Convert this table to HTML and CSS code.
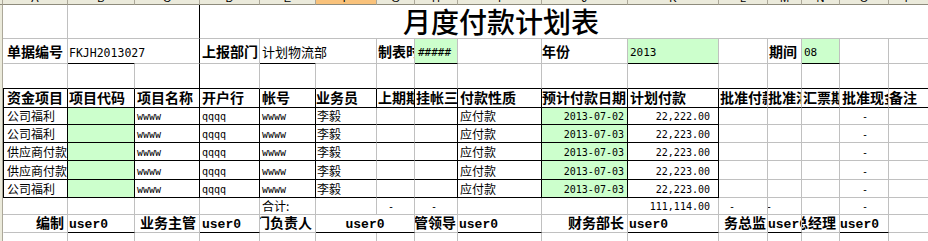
FILE: index.html
```html
<!DOCTYPE html>
<html lang="zh-CN">
<head>
<meta charset="utf-8">
<title>月度付款计划表</title>
<link rel="stylesheet" href="styles.css">
</head>
<body>
<div class="sheet">
  <div class="row colhead">
    <div class="corner"></div>
    <div class="ch">A</div><div class="ch">B</div><div class="ch">C</div><div class="ch">D</div>
    <div class="ch">E</div><div class="ch sel">F</div><div class="ch">G</div><div class="ch">H</div>
    <div class="ch">I</div><div class="ch">J</div><div class="ch">K</div><div class="ch">L</div>
    <div class="ch">M</div><div class="ch">N</div><div class="ch">O</div><div class="ch">P</div>
  </div>

  <div class="row r1">
    <div class="rh"></div>
    <div class="c"></div>
    <div class="c span2 kr"></div>
    <div class="c title-cell"><span class="title">月度付款计划表</span></div>
  </div>

  <div class="row r2">
    <div class="rh"></div>
    <div class="c a"><span class="b14">单据编号</span></div>
    <div class="c ovf kb pl1"><span class="m12">FKJH2013027</span></div>
    <div class="c kr"></div>
    <div class="c"><span class="b14">上报部门</span></div>
    <div class="c ovf kb"><span class="t13">计划物流部</span></div>
    <div class="c"></div>
    <div class="c pl1"><span class="b14">制表时</span></div>
    <div class="c gr kb pl3"><span class="m11">#####</span></div>
    <div class="c"></div>
    <div class="c pl0"><span class="b14">年份</span></div>
    <div class="c gr kb"><span class="m11">2013</span></div>
    <div class="c"></div>
    <div class="c pl1"><span class="b14">期间</span></div>
    <div class="c gr kb"><span class="m11">08</span></div>
    <div class="c"></div>
    <div class="c"></div>
  </div>

  <div class="row r3">
    <div class="rh"></div>
    <div class="c kb"></div><div class="c kb"></div><div class="c kb kr"></div><div class="c kb"></div>
    <div class="c kb"></div><div class="c kb"></div><div class="c kb"></div><div class="c kb"></div>
    <div class="c kb"></div><div class="c kb"></div><div class="c kb"></div><div class="c kb"></div>
    <div class="c kb"></div><div class="c kb"></div><div class="c kb"></div><div class="c kb"></div>
  </div>

  <div class="row r4">
    <div class="rh"></div>
    <div class="c a k kl"><span class="b14">资金项目</span></div>
    <div class="c k pl1"><span class="b14">项目代码</span></div>
    <div class="c k"><span class="b14">项目名称</span></div>
    <div class="c k"><span class="b14">开户行</span></div>
    <div class="c k"><span class="b14">帐号</span></div>
    <div class="c k pl0"><span class="b14">业务员</span></div>
    <div class="c k pl1"><span class="b14">上期期</span></div>
    <div class="c k pl1"><span class="b14">挂帐三</span></div>
    <div class="c k"><span class="b14">付款性质</span></div>
    <div class="c k pl0"><span class="b14">预计付款日期</span></div>
    <div class="c k"><span class="b14">计划付款</span></div>
    <div class="c kb pl1"><span class="b14">批准付款</span></div>
    <div class="c kb pl0"><span class="b14">批准汇票</span></div>
    <div class="c kb pl1"><span class="b14">汇票期限</span></div>
    <div class="c kb"><span class="b14">批准现金</span></div>
    <div class="c kb pl0"><span class="b14">备注</span></div>
  </div>

  <div class="row rd h17">
    <div class="rh"></div>
    <div class="c a k kl"><span class="t12">公司福利</span></div>
    <div class="c gr k"></div>
    <div class="c k"><span class="m10">wwww</span></div>
    <div class="c k"><span class="m10">qqqq</span></div>
    <div class="c k"><span class="m10">wwww</span></div>
    <div class="c kb pl1"><span class="t12">李毅</span></div>
    <div class="c kb"></div>
    <div class="c k"></div>
    <div class="c k"><span class="t12">应付款</span></div>
    <div class="c gr k date"><span class="m10">2013-07-02</span></div>
    <div class="c k amt"><span class="m10">22,222.00</span></div>
    <div class="c"></div><div class="c"></div><div class="c"></div>
    <div class="c dash"><span class="m10">-</span></div>
    <div class="c"></div>
  </div>

  <div class="row rd h18">
    <div class="rh"></div>
    <div class="c a k kl"><span class="t12">公司福利</span></div>
    <div class="c gr k"></div>
    <div class="c k"><span class="m10">wwww</span></div>
    <div class="c k"><span class="m10">qqqq</span></div>
    <div class="c k"><span class="m10">wwww</span></div>
    <div class="c kb pl1"><span class="t12">李毅</span></div>
    <div class="c kb"></div>
    <div class="c k"></div>
    <div class="c k"><span class="t12">应付款</span></div>
    <div class="c gr k date"><span class="m10">2013-07-03</span></div>
    <div class="c k amt"><span class="m10">22,223.00</span></div>
    <div class="c"></div><div class="c"></div><div class="c"></div>
    <div class="c dash"><span class="m10">-</span></div>
    <div class="c"></div>
  </div>

  <div class="row rd h18">
    <div class="rh"></div>
    <div class="c a k kl"><span class="t12">供应商付款</span></div>
    <div class="c gr k"></div>
    <div class="c k"><span class="m10">wwww</span></div>
    <div class="c k"><span class="m10">qqqq</span></div>
    <div class="c k"><span class="m10">wwww</span></div>
    <div class="c kb pl1"><span class="t12">李毅</span></div>
    <div class="c kb"></div>
    <div class="c k"></div>
    <div class="c k"><span class="t12">应付款</span></div>
    <div class="c gr k date"><span class="m10">2013-07-03</span></div>
    <div class="c k amt"><span class="m10">22,223.00</span></div>
    <div class="c"></div><div class="c"></div><div class="c"></div>
    <div class="c dash"><span class="m10">-</span></div>
    <div class="c"></div>
  </div>

  <div class="row rd h19">
    <div class="rh"></div>
    <div class="c a k kl"><span class="t12">供应商付款</span></div>
    <div class="c gr k"></div>
    <div class="c k"><span class="m10">wwww</span></div>
    <div class="c k"><span class="m10">qqqq</span></div>
    <div class="c k"><span class="m10">wwww</span></div>
    <div class="c kb pl1"><span class="t12">李毅</span></div>
    <div class="c kb"></div>
    <div class="c k"></div>
    <div class="c k"><span class="t12">应付款</span></div>
    <div class="c gr k date"><span class="m10">2013-07-03</span></div>
    <div class="c k amt"><span class="m10">22,223.00</span></div>
    <div class="c"></div><div class="c"></div><div class="c"></div>
    <div class="c dash"><span class="m10">-</span></div>
    <div class="c"></div>
  </div>

  <div class="row rd h18">
    <div class="rh"></div>
    <div class="c a k kl"><span class="t12">公司福利</span></div>
    <div class="c gr k"></div>
    <div class="c k"><span class="m10">wwww</span></div>
    <div class="c k"><span class="m10">qqqq</span></div>
    <div class="c k"><span class="m10">wwww</span></div>
    <div class="c kb pl1"><span class="t12">李毅</span></div>
    <div class="c kb"></div>
    <div class="c k"></div>
    <div class="c k"><span class="t12">应付款</span></div>
    <div class="c gr k date"><span class="m10">2013-07-03</span></div>
    <div class="c k amt"><span class="m10">22,223.00</span></div>
    <div class="c"></div><div class="c"></div><div class="c"></div>
    <div class="c dash"><span class="m10">-</span></div>
    <div class="c"></div>
  </div>

  <div class="row rsum">
    <div class="rh"></div>
    <div class="c"></div><div class="c"></div><div class="c"></div><div class="c"></div>
    <div class="c"><span class="t12">合计:</span></div>
    <div class="c"></div>
    <div class="c dash"><span class="m10">-</span></div>
    <div class="c dash"><span class="m10">-</span></div>
    <div class="c"></div>
    <div class="c"></div>
    <div class="c amt"><span class="m10">111,114.00</span></div>
    <div class="c dash-l"><span class="m10">-</span></div>
    <div class="c dash-m"><span class="m10">-</span></div>
    <div class="c"></div>
    <div class="c dash"><span class="m10">-</span></div>
    <div class="c"></div>
  </div>

  <div class="row rsig">
    <div class="rh"></div>
    <div class="c a lab"><span class="b14">编制</span></div>
    <div class="c kb u"><span class="uf">user0</span></div>
    <div class="c lab"><span class="b14">业务主管</span></div>
    <div class="c kb u pl2"><span class="uf">user0</span></div>
    <div class="c lab"><span class="b14">门负责人</span></div>
    <div class="c span2 kb u ctr"><span class="uf">user0</span></div>
    <div class="c lab pr1"><span class="b14">管领导</span></div>
    <div class="c kb u"><span class="uf">user0</span></div>
    <div class="c lab"><span class="b14">财务部长</span></div>
    <div class="c kb u"><span class="uf">user0</span></div>
    <div class="c lab pr1"><span class="b14">务总监</span></div>
    <div class="c kb u pl0"><span class="uf">user0</span></div>
    <div class="c lab"><span class="b14">总经理</span></div>
    <div class="c kb u pl0"><span class="uf">user0</span></div>
    <div class="c"></div>
  </div>

  <div class="row rlast">
    <div class="rh"></div>
    <div class="c"></div><div class="c"></div><div class="c"></div><div class="c"></div>
    <div class="c"></div><div class="c"></div><div class="c"></div><div class="c"></div>
    <div class="c"></div><div class="c"></div><div class="c"></div><div class="c"></div>
    <div class="c"></div><div class="c"></div><div class="c"></div><div class="c"></div>
  </div>
</div>
</body>
</html>
```

FILE: styles.css
```css
:root {
  --grid: #c0c0c0;
  --ink: #000000;
  --green: #ccffcc;
  --hdr: #ebeadb;
  --hdr-line: #aca899;
}

* { box-sizing: border-box; }

html, body {
  margin: 0;
  padding: 0;
  background: #ffffff;
  overflow: hidden;
}

body {
  width: 928px;
  height: 241px;
  font-family: "Noto Sans CJK SC", sans-serif;
  color: var(--ink);
}

.sheet { width: 929px; }

.row {
  display: grid;
  grid-template-columns: 3px 65px 67px 65px 60px 56px 61px 38px 43px 84px 86px 91px 49px 34px 38px 49px 40px;
}

/* column header strip */
.colhead { height: 5px; }
.corner {
  background: var(--hdr);
  border-right: 1px solid var(--hdr-line);
  border-bottom: 1px solid #8e8b7c;
}
.ch {
  background: var(--hdr);
  border-right: 1px solid var(--hdr-line);
  border-bottom: 1px solid #8e8b7c;
  overflow: hidden;
  display: flex;
  justify-content: center;
  align-items: flex-end;
  font: 11px/11px "Liberation Sans", sans-serif;
  color: #000;
}
.ch.sel { background: #f9c27b; }

/* row header remnant */
.rh {
  background: var(--hdr);
  border-right: 1px solid var(--hdr-line);
}

/* cells */
.c {
  display: flex;
  align-items: flex-end;
  min-width: 0;
  overflow: hidden;
  white-space: nowrap;
  border-right: 1px solid var(--grid);
  border-bottom: 1px solid var(--grid);
  padding: 0 0 var(--pb, 2px) 2px;
}
.c > span { display: block; line-height: 1; }

.c.a { border-left: 1px solid transparent; padding-left: 3px; }
.c.kl { border-left-color: var(--ink); }
.c.k { border-right-color: var(--ink); border-bottom-color: var(--ink); }
.c.kb { border-bottom-color: var(--ink); }
.c.kr { border-right-color: var(--ink); }
.c.gr { background: var(--green); }
.c.ovf { overflow: visible; border-right-color: transparent; }
.c.span2 { grid-column: span 2; }
.c.pl0 { padding-left: 0; }
.c.pl1 { padding-left: 1px; }
.c.pl2 { padding-left: 2px; }
.c.pl3 { padding-left: 3px; }

/* fonts */
.title { font-size: 28px; font-weight: 500; }
.b14 { font-size: 14px; font-weight: 700; }
.t12 { font-size: 12px; }
.t13 { font-size: 13px; }
.m10 { font-family: "DejaVu Sans Mono", monospace; font-size: 10px; }
.m11 { font-family: "DejaVu Sans Mono", monospace; font-size: 11px; }
.m12 { font-family: "DejaVu Sans Mono", monospace; font-size: 11.5px; margin-bottom: -1px; }
.uf { font-family: "Liberation Mono", monospace; font-size: 13px; font-weight: 700; }

/* rows */
.r1 { height: 34px; --pb: 3px; }
.r2 { height: 25px; --pb: 5px; }
.r3 { height: 25px; }
.r4 { height: 19px; --pb: 3px; }
.rd { --pb: 2px; }
.h17 { height: 17px; }
.h18 { height: 18px; }
.h19 { height: 19px; }
.rsum { height: 17px; --pb: 2px; }
.rsig { height: 18px; --pb: 3px; }
.rlast { height: 18px; }

.title-cell {
  grid-column: span 13;
  justify-content: center;
  border-right: none;
  padding-right: 129px;
}

.date { justify-content: flex-end; padding-right: 3px; }
.amt { justify-content: flex-end; padding-right: 8px; }
.dash { justify-content: flex-end; padding-right: 20px; }
.dash-l { padding-left: 10px; }
.dash-m { padding-left: 0; }
.dash-m > span { margin-left: -2px; }

.lab { justify-content: flex-end; padding-right: 3px; }
.lab.pr1 { padding-right: 1px; }
.u { padding-left: 1px; padding-bottom: 1px; }
.u.pl0 { padding-left: 0; }
.u.pl2 { padding-left: 2px; }
.ctr { justify-content: center; padding-left: 0; }
```
